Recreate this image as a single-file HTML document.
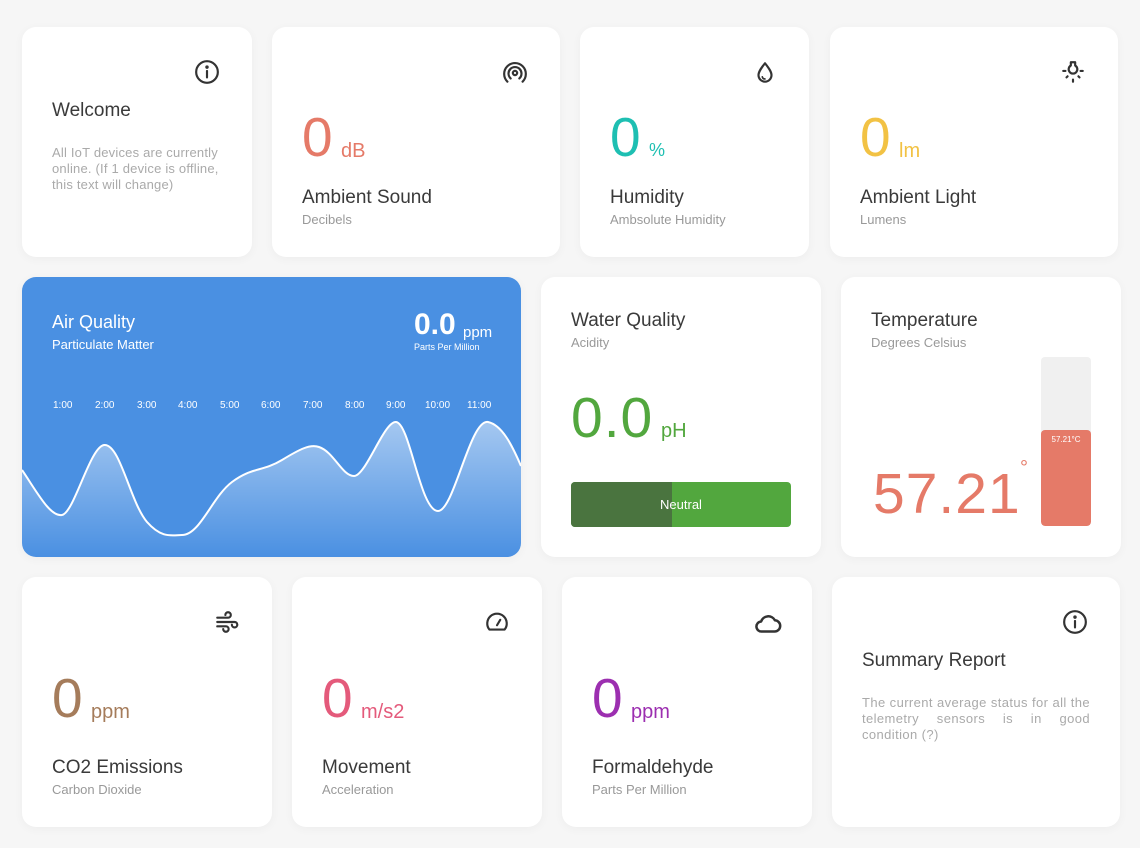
<!DOCTYPE html>
<html><head><meta charset="utf-8"><style>
*{margin:0;padding:0;box-sizing:border-box}
body{width:1140px;height:848px;background:#f6f6f6;font-family:"Liberation Sans",sans-serif;position:relative;overflow:hidden}
.c{position:absolute;background:#fff;border-radius:14px;box-shadow:0 2px 10px rgba(0,0,0,.04)}
.a{position:absolute;white-space:nowrap}
.t{font-size:19px;color:#3a3a3a}
.s{font-size:13px;color:#999}
.n{font-size:55px;line-height:1}
.u{font-size:20px}
svg.i{position:absolute;width:26px;height:26px;fill:none;stroke:#333;stroke-width:2;stroke-linecap:round;stroke-linejoin:round}
</style></head><body>

<!-- Row 1 -->
<div class="c" style="left:22px;top:27px;width:230px;height:230px">
<svg class="i" viewBox="0 0 24 24" style="left:172px;top:32px"><circle cx="12" cy="12" r="10"/><path d="M12 11v6"/><circle cx="12" cy="7.5" r=".6" fill="#333"/></svg>
<div class="a t" style="left:30px;top:73px">Welcome</div>
<div class="a s" style="left:30px;top:118px;white-space:normal;width:176px;line-height:16px;color:#aaa;letter-spacing:.2px">All IoT devices are currently online. (If 1 device is offline, this text will change)</div>
</div>

<div class="c" style="left:272px;top:27px;width:288px;height:230px">
<svg class="i" viewBox="0 0 24 24" style="left:230px;top:33px"><circle cx="12" cy="12" r="2"/><path d="M8 17a6 6 0 1 1 8 0M5 20a10 10 0 1 1 14 0"/></svg>
<div class="a n" style="left:30px;top:83px;color:#e57a68">0</div>
<div class="a u" style="left:69px;top:113px;color:#e57a68">dB</div>
<div class="a t" style="left:30px;top:160px">Ambient Sound</div>
<div class="a s" style="left:30px;top:185px">Decibels</div>
</div>

<div class="c" style="left:580px;top:27px;width:229px;height:230px">
<svg class="i" viewBox="0 0 24 24" style="left:172px;top:33px"><path d="M12 3c4 5 6 8 6 11a6 6 0 0 1-12 0c0-3 2-6 6-11z"/><path d="M9.5 15.5a2.5 2.5 0 0 0 2.5 2" stroke-width="1.5"/></svg>
<div class="a n" style="left:30px;top:83px;color:#1ebfb2">0</div>
<div class="a u" style="left:69px;top:113px;color:#1ebfb2;font-size:18px">%</div>
<div class="a t" style="left:30px;top:160px">Humidity</div>
<div class="a s" style="left:30px;top:185px">Ambsolute Humidity</div>
</div>

<div class="c" style="left:830px;top:27px;width:288px;height:230px">
<svg class="i" viewBox="0 0 24 24" style="left:230px;top:32px"><path d="M10 3h4v3a4 4 0 1 1-4 0z"/><path d="M3 11h2M19 11h2M6 17l1-1M18 17l-1-1M12 19v2"/></svg>
<div class="a n" style="left:30px;top:83px;color:#f2c244">0</div>
<div class="a u" style="left:69px;top:113px;color:#f2c244">lm</div>
<div class="a t" style="left:30px;top:160px">Ambient Light</div>
<div class="a s" style="left:30px;top:185px">Lumens</div>
</div>

<!-- Row 2 -->
<div class="c" style="left:22px;top:277px;width:499px;height:280px;background:#4a90e2;overflow:hidden">
<div class="a" style="left:30px;top:35px;font-size:18px;color:#fff">Air Quality</div>
<div class="a" style="left:30px;top:60px;font-size:13px;color:#fff">Particulate Matter</div>
<div class="a" style="left:392px;top:31px;font-size:30px;font-weight:bold;color:#fff">0.0</div>
<div class="a" style="left:441px;top:47px;font-size:15px;color:#fff">ppm</div>
<div class="a" style="left:392px;top:65px;font-size:9px;color:#fff">Parts Per Million</div>
<div class="a" style="left:31px;top:123px;font-size:10px;color:#fff;word-spacing:0">
<span style="position:absolute;left:0">1:00</span><span style="position:absolute;left:42px">2:00</span><span style="position:absolute;left:84px">3:00</span><span style="position:absolute;left:125px">4:00</span><span style="position:absolute;left:167px">5:00</span><span style="position:absolute;left:208px">6:00</span><span style="position:absolute;left:250px">7:00</span><span style="position:absolute;left:292px">8:00</span><span style="position:absolute;left:333px">9:00</span><span style="position:absolute;left:372px">10:00</span><span style="position:absolute;left:414px">11:00</span></div>
<svg style="position:absolute;left:0;top:0" width="499" height="280" viewBox="0 0 499 280">
<defs><linearGradient id="g" x1="0" y1="0" x2="0" y2="1"><stop offset="0" stop-color="#fff" stop-opacity=".5"/><stop offset="1" stop-color="#fff" stop-opacity="0"/></linearGradient></defs>
<path d="M0 193C15 215 28 240 40 238C52 236 68 170 82 168C98 166 108 225 125 245C140 262 150 258 160 258C178 258 190 220 210 205C230 190 240 195 260 183C278 172 288 167 297 170C312 175 320 199 332 199C344 199 362 144 374 145C388 146 398 234 416 234C432 234 448 142 466 145C480 148 490 168 499 189L499 280L0 280Z" fill="url(#g)"/>
<path d="M0 193C15 215 28 240 40 238C52 236 68 170 82 168C98 166 108 225 125 245C140 262 150 258 160 258C178 258 190 220 210 205C230 190 240 195 260 183C278 172 288 167 297 170C312 175 320 199 332 199C344 199 362 144 374 145C388 146 398 234 416 234C432 234 448 142 466 145C480 148 490 168 499 189" fill="none" stroke="#fff" stroke-width="2"/>
</svg>
</div>

<div class="c" style="left:541px;top:277px;width:280px;height:280px">
<div class="a t" style="left:30px;top:33px">Water Quality</div>
<div class="a s" style="left:30px;top:58px">Acidity</div>
<div class="a n" style="left:30px;top:113px;font-size:57px;color:#52a73e;letter-spacing:1px">0.0</div>
<div class="a u" style="left:120px;top:143px;color:#52a73e">pH</div>
<div class="a" style="left:30px;top:205px;width:220px;height:45px;border-radius:4px;background:#52a73e;overflow:hidden">
<div style="position:absolute;left:0;top:0;width:101px;height:45px;background:#4a743f"></div>
<div style="position:absolute;width:220px;text-align:center;top:15px;font-size:13px;color:#fff">Neutral</div></div>
</div>

<div class="c" style="left:841px;top:277px;width:280px;height:280px">
<div class="a t" style="left:30px;top:33px">Temperature</div>
<div class="a s" style="left:30px;top:58px">Degrees Celsius</div>
<div class="a n" style="left:32px;top:189px;font-size:57px;color:#e57a68;letter-spacing:1px">57.21</div>
<div class="a" style="left:179px;top:180px;font-size:20px;color:#e57a68">°</div>
<div class="a" style="left:200px;top:80px;width:50px;height:169px;background:#f0f0f0;border-radius:4px;overflow:hidden">
<div style="position:absolute;left:0;bottom:0;width:50px;height:96px;background:#e57a68;border-radius:4px;color:#fff;font-size:8px;text-align:center;padding-top:5px">57.21°C</div></div>
</div>

<!-- Row 3 -->
<div class="c" style="left:22px;top:577px;width:250px;height:250px">
<svg class="i" viewBox="0 0 24 24" style="left:192px;top:32px"><path d="M3 8h10a2.5 2.5 0 1 0-2.5-2.5M3 12h16a2.5 2.5 0 1 1-2.5 2.5M3 16h8a2.5 2.5 0 1 1-2.5 2.5"/></svg>
<div class="a n" style="left:30px;top:94px;color:#a57c5b">0</div>
<div class="a u" style="left:69px;top:124px;color:#a57c5b">ppm</div>
<div class="a t" style="left:30px;top:180px">CO2 Emissions</div>
<div class="a s" style="left:30px;top:205px">Carbon Dioxide</div>
</div>

<div class="c" style="left:292px;top:577px;width:250px;height:250px">
<svg class="i" viewBox="0 0 24 24" style="left:192px;top:32px"><path d="M5 19a9 9 0 1 1 14 0z"/><path d="M12 15l3-5"/></svg>
<div class="a n" style="left:30px;top:94px;color:#e45a7b">0</div>
<div class="a u" style="left:69px;top:124px;color:#e45a7b">m/s2</div>
<div class="a t" style="left:30px;top:180px">Movement</div>
<div class="a s" style="left:30px;top:205px">Acceleration</div>
</div>

<div class="c" style="left:562px;top:577px;width:250px;height:250px">
<svg class="i" viewBox="0 0 24 24" style="left:191px;top:32px;width:30px;height:30px"><path d="M7 18a4 4 0 0 1-.5-8A6 6 0 0 1 17.5 9 4.5 4.5 0 0 1 17 18z"/></svg>
<div class="a n" style="left:30px;top:94px;color:#9c2fb0">0</div>
<div class="a u" style="left:69px;top:124px;color:#9c2fb0">ppm</div>
<div class="a t" style="left:30px;top:180px">Formaldehyde</div>
<div class="a s" style="left:30px;top:205px">Parts Per Million</div>
</div>

<div class="c" style="left:832px;top:577px;width:288px;height:250px">
<svg class="i" viewBox="0 0 24 24" style="left:230px;top:32px"><circle cx="12" cy="12" r="10"/><path d="M12 11v6"/><circle cx="12" cy="7.5" r=".6" fill="#333"/></svg>
<div class="a t" style="left:30px;top:73px">Summary Report</div>
<div class="a s" style="left:30px;top:118px;white-space:normal;width:228px;line-height:16px;text-align:justify;color:#aaa;letter-spacing:.4px">The current average status for all the telemetry sensors is in good condition (?)</div>
</div>
</body></html>
